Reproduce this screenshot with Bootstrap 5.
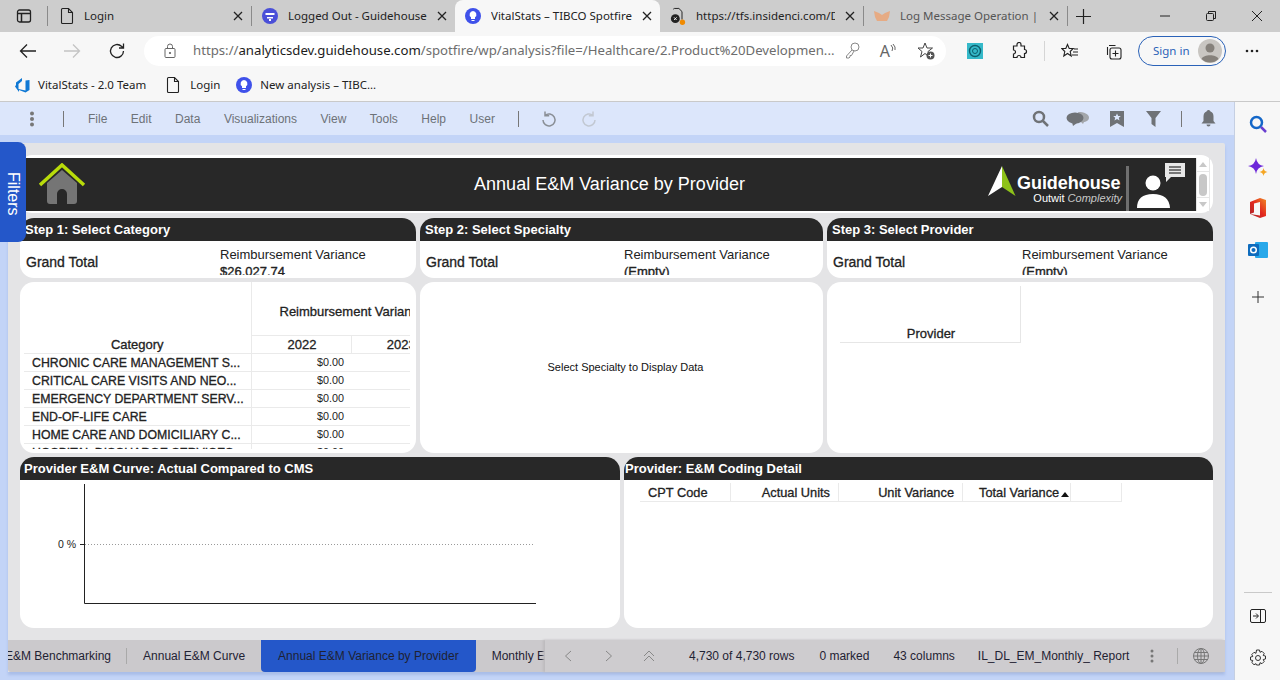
<!DOCTYPE html>
<html lang="en">
<head>
  <meta charset="UTF-8" />
  <title>VitalStats – TIBCO Spotfire</title>
  <link href="https://cdn.jsdelivr.net/npm/bootstrap@5.3.3/dist/css/bootstrap.min.css" rel="stylesheet">
  <style>
    html, body { width: 1280px; height: 680px; overflow: hidden; }
    body { font-family: "Liberation Sans", Arial, sans-serif; background: #c3d4f7; color: #000; position: relative; }
    svg { display: block; flex: none; }

    /* browser frame */
    .edge-font { font-family: "Noto Sans", sans-serif; font-size: 11.5px; color: #222; }
    .tab-strip { height: 32px; background: #cdcdcd; }
    .win-btn { width: 47px; flex: none; }
    .strip-sep { width: 1px; height: 20px; background: #8a8a8a; flex: none; }
    .brow-tab { height: 32px; padding: 0 8px 0 10px; gap: 10px; flex: none; white-space: nowrap; }
    .brow-tab .tab-name { flex: 1; overflow: hidden; white-space: nowrap; }
    .brow-tab.is-active { background: #f7f7f7; border-radius: 8px 8px 0 0; }
    .tab-one { width: 203px; padding-left: 12px; }
    .tab-two { width: 203px; }
    .tab-three { width: 205px; }
    .tab-four { width: 203px; }
    .tab-five { width: 203px; }
    .addr-bar { height: 37px; background: #f7f7f7; }
    .addr-pill { width: 802px; height: 30px; background: #fff; border-radius: 15px; margin-left: 18px; padding: 0 11px 0 20px; font-size: 13.2px; color: #6d6d6d; white-space: nowrap; }
    .addr-pill b { font-weight: 400; color: #1c1c1c; }
    .addr-url { flex: 1; overflow: hidden; margin-left: 17px; }
    .sign-pill { width: 88px; height: 30px; border: 1px solid #2a62b8; border-radius: 15px; color: #2a62b8; font-size: 11.5px; padding-left: 14px; }
    .book-bar { height: 33px; background: #f7f7f7; border-bottom: 1px solid #c9c9c9; padding-left: 14px; gap: 8px; }

    /* spotfire menu bar */
    .menu-bar { width: 1234px; height: 33px; background: #dce6fb; color: #6d7278; font-size: 12px; }
    .menu-items { gap: 23.5px; margin-left: 24px; }
    .bar-sep { width: 1px; height: 16px; background: #777; flex: none; }
    .work-row { height: 545px; }
    .side-rail { width: 46px; background: #f7f7f7; border-left: 1px solid #c5cfe2; margin-top: -33px; height: 578px; flex: none; z-index: 2; }
    .work-wrap { width: 1234px; padding: 8px 9px 0 8px; flex: none; }

    /* canvas */
    .app-canvas { height: 529px; background: #e4e4e6; padding: 12px 12px 0; border-radius: 2px 2px 0 0; box-shadow: 0 3px 3px #a9bde8; }
    .dash-head { height: 58px; background: #fff; border-radius: 12px; padding: 3px 3px 2px 0; }
    .dash-black { flex: 1; background: #282828; color: #fff; min-width: 0; }
    .dash-title { font-size: 18px; flex: 1; margin-left: 145px; }
    .home-mark { margin-left: 18px; margin-top: -1px; }
    .logo-tip { margin-bottom: 7px; }
    .logo-words { width: 105px; margin: 9px 0 0 1px; }
    .logo-rule { width: 3px; height: 45px; background: #6f6f6f; margin-left: 4px; }
    .mini-scroll { width: 14px; background: #fff; border: 1px solid #e6e6e6; border-width: 0 1px; }
    .mini-thumb { width: 8px; height: 22px; background: #c8c8c8; border-radius: 4px; }
    .scroll-cap { width: 100%; height: 14px; border-bottom: 1px solid #e6e6e6; }
    .scroll-cap.is-low { border-bottom: 0; border-top: 1px solid #e6e6e6; }
    .row-gap { gap: 4px; }
    .col-a { width: 396px; }
    .col-b { width: 403px; }
    .col-c { width: 386px; }
    .col-l { width: 600px; }
    .col-r { width: 589px; }
    .panel-box { background: #fff; border-radius: 14px; overflow: hidden; flex: none; }
    .panel-bar { height: 23px; background: #282828; color: #fff; font-size: 13px; font-weight: 700; line-height: 23px; padding-left: 5px; }
    .step-row { height: 60px; margin-top: 5px; }
    .mid-row { height: 171px; margin-top: 4px; }
    .low-row { height: 171px; margin-top: 4px; }
    .step-body { height: 34px; overflow: hidden; padding-left: 6px; }
    .grand-lbl { width: 194px; padding-top: 13px; font-size: 14px; color: #222; line-height: 16px; -webkit-text-stroke: .3px #222; }
    .var-lbl { font-size: 13px; line-height: 17px; padding-top: 5px; color: #222; }
    .var-lbl strong { display: block; font-weight: 400; -webkit-text-stroke: .35px #222; }

    /* cross tables */
    .tbl-clip { position: relative; width: 386px; height: 167px; margin: 0 0 0 4px; overflow: hidden; }
    .spot-tbl { border-collapse: collapse; table-layout: fixed; width: 500px; font-size: 12px; line-height: 15px; }
    .spot-tbl td, .spot-tbl th { padding: 0; border: 0 solid #eaeaea; white-space: nowrap; overflow: hidden; }
    .spot-tbl th { text-align: center; font-weight: 400; font-size: 13px; color: #222; -webkit-text-stroke: .3px #222; }
    .spot-tbl .cat-head { padding-bottom: 1px; border-right-width: 1px; border-bottom-width: 1px; vertical-align: bottom; }
    .spot-tbl .cat-cell { padding: 2px 0 0 8px; font-size: 12.3px; color: #222; -webkit-text-stroke: .3px #222; border-right-width: 1px; border-bottom-width: 1px; height: 18px; }
    .spot-tbl .val-cell { text-align: right; padding-right: 7px; font-size: 10.8px; color: #222; border-bottom-width: 1px; }
    .spot-tbl .clip-text { padding: 22px 0 0 28px; text-align: left; vertical-align: top; }
    .panel-note { font-size: 11px; color: #111; height: 171px; padding-left: 8px; }
    .prov-tbl { width: 181px; height: 57px; margin: 4px 0 0 13px; padding: 40px 0 0 2px; border-right: 1px solid #e6e6e6; border-bottom: 1px solid #e6e6e6; font-size: 13px; color: #222; -webkit-text-stroke: .3px #222; text-align: center; line-height: 15px; }
    .code-head { width: 482px; height: 19px; margin: 3px 0 0 16px; border-bottom: 1px solid #eaeaea; font-size: 12.8px; color: #222; -webkit-text-stroke: .3px #222; line-height: 19px; }
    .code-col { border-right: 1px solid #eaeaea; height: 18px; flex: none; text-align: right; padding-right: 8px; white-space: nowrap; }
    .sort-up { width: 0; height: 0; display: inline-block; border: 4px solid transparent; border-top-width: 0; border-bottom: 5px solid #111; margin-left: 2px; vertical-align: 0; }
    .chart-txt { font-family: "Liberation Sans", Arial, sans-serif; font-size: 10.5px; fill: #222; }

    /* bottom bar */
    .page-bar { height: 32px; background: #cbc9cc; margin: 12px -12px 0; font-size: 12px; color: #1f2233; border-radius: 0 0 3px 3px; white-space: nowrap; }
    .page-tabs { width: 537px; overflow: hidden; flex: none; height: 32px; }
    .page-first { margin-left: -3px; padding-right: 15px; border-right: 1px solid #a9a9a9; line-height: 16px; }
    .page-tab { padding: 0 16px; line-height: 32px; }
    .page-tab.is-open { background: #2457c9; border-radius: 0 0 4px 4px; width: 215px; padding: 0 17px; }
    .page-info { flex: 1; height: 32px; background: #cecccf; box-shadow: -2px 0 2px #bdbbbe; }
    .guide-mark { font-size: 18px; font-weight: 700; line-height: 18px; letter-spacing: -.05px; }
    .guide-sub { font-size: 11px; line-height: 12px; text-align: right; }
    .guide-sub i { color: #c9c9c9; font-weight: 400; }
    .filter-tab { position: absolute; left: 0; top: 142px; width: 26px; height: 100px; padding-top: 4px; background: #2457c9; border-radius: 0 8px 8px 0; color: #fff; font-size: 16px; writing-mode: vertical-rl; text-align: center; line-height: 26px; z-index: 5; font-family: "Liberation Sans", Arial, sans-serif; }
  </style>
</head>
<body>
  <div class="filter-tab">Filters</div>

  <!-- browser tabs -->
  <div class="tab-strip d-flex align-items-center edge-font">
    <div class="win-btn d-flex align-items-center ps-3">
      <svg width="16" height="16" viewBox="0 0 16 16" fill="none" stroke="#222" stroke-width="1.3"><rect x="1.5" y="2" width="13" height="12" rx="2"/><path d="M1.5 5.500h13M5.500 5.500V14" stroke-width="1.5"/></svg>
    </div>
    <div class="strip-sep"></div>
    <div class="brow-tab tab-one d-flex align-items-center">
      <svg width="14" height="18" viewBox="0 0 14 18" fill="none" stroke="#222" stroke-width="1.1"><path d="M1.500 2.500q0-1 1-1h6l4 4v10q0 1-1 1h-9q-1 0-1-1zM8.500 1.500v4h4"/></svg>
      <span class="tab-name">Login</span>
      <svg width="10" height="10" viewBox="0 0 10 10" stroke="#222" stroke-width="1.3"><path d="M1 1l8 8M9 1l-8 8"/></svg>
    </div>
    <div class="strip-sep"></div>
    <div class="brow-tab tab-two d-flex align-items-center">
      <svg width="16" height="16" viewBox="0 0 16 16"><circle cx="8" cy="8" r="8" fill="#4a4fd8"/><path d="M3.500 5h9v2h-9zM5 9h6v1.500H5zM7 11h2v2H7z" fill="#fff"/></svg>
      <span class="tab-name">Logged Out - Guidehouse</span>
      <svg width="10" height="10" viewBox="0 0 10 10" stroke="#222" stroke-width="1.3"><path d="M1 1l8 8M9 1l-8 8"/></svg>
    </div>
    <div class="brow-tab tab-three is-active d-flex align-items-center">
      <svg width="16" height="16" viewBox="0 0 16 16"><circle cx="8" cy="8" r="8" fill="#3f51ea"/><path d="M8 3a3.500 3.500 0 0 0-2 6.300V11h4V9.300A3.500 3.500 0 0 0 8 3zM6.500 12h3v1h-3z" fill="#fff"/></svg>
      <span class="tab-name">VitalStats – TIBCO Spotfire</span>
      <svg width="10" height="10" viewBox="0 0 10 10" stroke="#222" stroke-width="1.3"><path d="M1 1l8 8M9 1l-8 8"/></svg>
    </div>
    <div class="brow-tab tab-four d-flex align-items-center">
      <svg width="16" height="20" viewBox="0 0 18 20" fill="none"><path d="M4 2.500q0-1 1-1h5l3.500 3.500v9" stroke="#222" stroke-width="1.1"/><circle cx="6" cy="13" r="5" fill="#222"/><path d="M4.500 11.500l3 3M7.500 11.500l-3 3" stroke="#fff"/><circle cx="14" cy="17" r="3" fill="#f08a00"/></svg>
      <span class="tab-name">https://tfs.insidenci.com/D</span>
      <svg width="10" height="10" viewBox="0 0 10 10" stroke="#222" stroke-width="1.3"><path d="M1 1l8 8M9 1l-8 8"/></svg>
    </div>
    <div class="strip-sep"></div>
    <div class="brow-tab tab-five d-flex align-items-center">
      <svg width="16" height="12" viewBox="0 0 16 12" fill="#e6ab84"><path d="M0 1l5 2 3 2 3-2 5-2-1 6-2 4H3L1 7z"/></svg>
      <span class="tab-name" style="color:#555">Log Message Operation | T</span>
      <svg width="10" height="10" viewBox="0 0 10 10" stroke="#222" stroke-width="1.3"><path d="M1 1l8 8M9 1l-8 8"/></svg>
    </div>
    <div class="strip-sep"></div>
    <svg class="ms-2" width="15" height="15" viewBox="0 0 15 15" stroke="#222" stroke-width="1.2"><path d="M7.500 0v15M0 7.500h15"/></svg>
    <div class="d-flex align-items-center ms-auto" style="gap:36px;padding-right:18px">
      <svg width="10" height="10" viewBox="0 0 10 10" stroke="#222"><path d="M0 5h10"/></svg>
      <svg width="10" height="10" viewBox="0 0 10 10" fill="none" stroke="#222"><rect x=".5" y="2.500" width="7" height="7" rx="1"/><path d="M2.500 2.500V.5h7v7H7.500"/></svg>
      <svg width="10" height="10" viewBox="0 0 10 10" stroke="#222"><path d="M0 0l10 10M10 0L0 10"/></svg>
    </div>
  </div>

  <!-- address bar -->
  <div class="addr-bar d-flex align-items-center edge-font">
    <svg style="margin-left:19px" width="18" height="16" viewBox="0 0 18 16" fill="none" stroke="#222" stroke-width="1.300"><path d="M17 8H1.500M8 1.500L1.500 8 8 14.500"/></svg>
    <svg style="margin-left:26px" width="18" height="16" viewBox="0 0 18 16" fill="none" stroke="#c4c4c4" stroke-width="1.300"><path d="M1 8h15.500M10 1.500L16.500 8 10 14.500"/></svg>
    <svg style="margin-left:27px" width="18" height="18" viewBox="0 0 18 18" fill="none" stroke="#222" stroke-width="1.300"><path d="M15.500 9a6.500 6.500 0 1 1-2-4.700L15.500 6M15.500 1.500V6H11"/></svg>
    <div class="addr-pill d-flex align-items-center">
      <svg width="12" height="15" viewBox="0 0 12 15" fill="none" stroke="#666"><rect x="1" y="5.500" width="10" height="9" rx="1"/><path d="M3.500 5.500V3.500a2.500 2.500 0 0 1 5 0v2"/><circle cx="6" cy="10" r=".7" fill="#666"/></svg>
      <span class="addr-url">https://<b>analyticsdev.guidehouse.com</b>/spotfire/wp/analysis?file=/Healthcare/2.Product%20Developmen...</span>
      <svg class="ms-2" width="15" height="17" viewBox="0 0 15 17" fill="none" stroke="#888"><circle cx="10" cy="5" r="4"/><path d="M7 8L1.500 14v2h2.500l1-1v-1.500h1.500L9 9"/></svg>
      <span style="margin-left:20px;font-size:16px;color:#666;line-height:1">A</span>
      <svg width="6" height="10" viewBox="0 0 6 10" fill="none" stroke="#666" class="align-self-start mt-2"><path d="M1 1q3 3 1 6M3 0q3 3 2 6"/></svg>
      <svg style="margin-left:21px" width="18" height="18" viewBox="0 0 18 18" fill="none" stroke="#444"><path d="M8 1l2 5h5.500L11 9.500 12.500 15 8 11.500 3.500 15 5 9.500 1 6h5z"/><circle cx="13.500" cy="13.500" r="4" fill="#555" stroke="none"/><path d="M13.500 11.500v4M11.500 13.500h4" stroke="#fff"/></svg>
    </div>
    <svg style="margin-left:21px" width="16" height="16" viewBox="0 0 16 16"><rect width="16" height="16" fill="#35b9c9"/><circle cx="8" cy="8" r="5.500" fill="none" stroke="#0d5f6e" stroke-width="1.400"/><circle cx="8" cy="8" r="2.500" fill="none" stroke="#0d5f6e"/></svg>
    <svg style="margin-left:27px" width="18" height="18" viewBox="0 0 18 18" fill="none" stroke="#222" stroke-width="1.200"><path d="M7 2.500a2 2 0 0 1 4 0V4h3.500v3.500a2 2 0 0 1 0 4V15.500H11a2 2 0 0 0-4 0H3.500V12a2 2 0 0 0 0-4V4H7z"/></svg>
    <div class="ms-3" style="width:1px;height:20px;background:#d5d5d5"></div>
    <svg class="ms-3" width="18" height="16" viewBox="0 0 18 16" fill="none" stroke="#222" stroke-width="1.100"><path d="M6.500 1.500l1.700 4h4l-3 3 1 4.500-3.700-2.500L2.800 13l1-4.500-3-3h4zM13 6h4M12 9h5M11 12h6"/></svg>
    <svg style="margin-left:26px" width="18" height="18" viewBox="0 0 18 18" fill="none" stroke="#222" stroke-width="1.100"><path d="M4 3.500h6.500M2.500 5v8"/><rect x="5" y="6" width="11" height="11" rx="2"/><path d="M10.500 8.500v6M7.500 11.500h6"/></svg>
    <div class="sign-pill d-flex align-items-center justify-content-between" style="margin-left:15px;padding-right:3px">
      <span>Sign in</span>
      <svg width="24" height="24" viewBox="0 0 24 24"><circle cx="12" cy="12" r="12" fill="#c9c6c2"/><circle cx="12" cy="9" r="4.500" fill="#86817b"/><path d="M3.500 20c2-5 15-5 17 0a12 12 0 0 1-17 0z" fill="#86817b"/></svg>
    </div>
    <div class="d-flex ms-auto" style="padding-right:21px">
      <svg width="14" height="4" viewBox="0 0 14 4" fill="#222"><circle cx="2" cy="2" r="1.300"/><circle cx="7" cy="2" r="1.300"/><circle cx="12" cy="2" r="1.300"/></svg>
    </div>
  </div>

  <!-- favourites -->
  <div class="book-bar d-flex align-items-center edge-font">
    <svg width="16" height="16" viewBox="0 0 16 16"><path d="M15.500 3v10l-4 2.500-6.500-2.500v2L1 9.500l1-1.500V5.500L8 1v3l-3.500 3v5l7 1.500V3.500z" fill="#0f78d4"/></svg>
    <span>VitalStats - 2.0 Team</span>
    <svg style="margin-left:12px" width="14" height="18" viewBox="0 0 14 18" fill="none" stroke="#222" stroke-width="1.100"><path d="M1.500 2.500q0-1 1-1h6l4 4v10q0 1-1 1h-9q-1 0-1-1zM8.500 1.500v4h4"/></svg>
    <span style="margin-left:2px">Login</span>
    <svg style="margin-left:8px" width="16" height="16" viewBox="0 0 16 16"><circle cx="8" cy="8" r="8" fill="#3f51ea"/><path d="M8 3a3.500 3.500 0 0 0-2 6.300V11h4V9.300A3.500 3.500 0 0 0 8 3zM6.500 12h3v1h-3z" fill="#fff"/></svg>
    <span>New analysis – TIBC...</span>
  </div>

  <!-- spotfire menu -->
  <div class="menu-bar d-flex align-items-center">
    <svg style="margin-left:29px" width="6" height="16" viewBox="0 0 6 16" fill="#777"><circle cx="3" cy="2.500" r="2"/><circle cx="3" cy="8" r="2"/><circle cx="3" cy="13.500" r="2"/></svg>
    <div class="bar-sep" style="margin-left:28px"></div>
    <div class="menu-items d-flex">
      <span>File</span><span>Edit</span><span>Data</span><span>Visualizations</span><span>View</span><span>Tools</span><span>Help</span><span>User</span>
    </div>
    <div class="bar-sep" style="margin-left:23px"></div>
    <svg style="margin-left:22px" width="16" height="18" viewBox="0 0 16 18" fill="none" stroke="#8a8f96" stroke-width="1.500"><path d="M4 5.500a6 6 0 1 1-2 4.500M4 1.500v4.200h4.200"/></svg>
    <svg style="margin-left:24px" width="16" height="18" viewBox="0 0 16 18" fill="none" stroke="#c2c8d2" stroke-width="1.500"><path d="M12 5.500a6 6 0 1 0 2 4.500M12 1.500v4.200H7.800"/></svg>
    <div class="d-flex align-items-center ms-auto" style="padding-right:18px">
      <svg width="17" height="17" viewBox="0 0 17 17" fill="none" stroke="#6f7276" stroke-width="2.500"><circle cx="7" cy="7" r="5"/><path d="M11 11l5 5"/></svg>
      <svg style="margin-left:17px" width="24" height="16" viewBox="0 0 24 16"><path d="M12 1c6 0 11 2 11 5.500S19 11 18 11l-1 2-2-2z" fill="#a3a6aa"/><ellipse cx="9" cy="7" rx="8.500" ry="5.500" fill="#6f7276"/><path d="M6 11l1 4 4-3z" fill="#6f7276"/></svg>
      <svg style="margin-left:20px" width="14" height="16" viewBox="0 0 14 16"><path d="M0 0h14v16l-7-4-7 4z" fill="#6f7276"/><path d="M7 2.500l1.200 2.500h2.600l-2 1.800.7 2.700L7 8l-2.500 1.500.7-2.700-2-1.800h2.600z" fill="#dce6fb"/></svg>
      <svg style="margin-left:22px" width="15" height="16" viewBox="0 0 15 16" fill="#6f7276"><path d="M0 0h15L9.500 7v9l-4-3V7z"/></svg>
      <div class="bar-sep" style="margin-left:20px"></div>
      <svg style="margin-left:19px" width="15" height="17" viewBox="0 0 15 17" fill="#6f7276"><path d="M7.500 0a2 2 0 0 1 2 1.500c2 .5 3 2.500 3 5V11l2 2.500H.5L2.500 11V6.500c0-2.500 1-4.500 3-5a2 2 0 0 1 2-1.500zM5.500 14.500h4a2 2 0 0 1-4 0z"/></svg>
    </div>
  </div>

  <div class="work-row d-flex">
    <div class="work-wrap">
      <div class="app-canvas">
        <!-- title strip -->
        <div class="dash-head d-flex">
          <div class="dash-black d-flex align-items-center">
            <svg class="home-mark" width="48" height="42" viewBox="0 0 48 42"><path d="M9 20L24 7l15 13v18q0 3-3 3h-7V31a5 5 0 0 0-10 0v10h-7q-3 0-3-3z" fill="#757575"/><path d="M2 22L24 2l22 20" fill="none" stroke="#b9dc0a" stroke-width="3.500"/></svg>
            <div class="text-center dash-title">Annual E&amp;M Variance by Provider</div>
            <svg class="logo-tip" width="28" height="30" viewBox="0 0 28 30"><path d="M14 0L0 30l14-9z" fill="#fff"/><path d="M14 0l13.500 30L14 21z" fill="#8ec21a"/></svg>
            <div class="logo-words">
              <div class="guide-mark">Guidehouse</div>
              <div class="guide-sub">Outwit <i>Complexity</i></div>
            </div>
            <div class="logo-rule align-self-end"></div>
            <svg style="margin:0 11px 0 8px" width="48" height="48" viewBox="0 0 48 48"><circle cx="16" cy="22" r="7.500" fill="#fff"/><path d="M0 47q0-14 16-14t17 14z" fill="#fff"/><path d="M28 2h20v14H34l-5 5v-5h-1z" fill="#e8e8e8"/><path d="M32 6h12M32 9h12M32 12h12" stroke="#777" stroke-width="2"/></svg>
          </div>
          <div class="mini-scroll d-flex flex-column align-items-center justify-content-between">
            <div class="scroll-cap d-flex align-items-center justify-content-center"><svg width="8" height="5" viewBox="0 0 8 5" fill="#c8c8c8"><path d="M0 5l4-5 4 5z"/></svg></div>
            <div class="mini-thumb"></div>
            <div class="scroll-cap is-low d-flex align-items-center justify-content-center"><svg width="8" height="5" viewBox="0 0 8 5" fill="#c8c8c8"><path d="M0 0l4 5 4-5z"/></svg></div>
          </div>
        </div>

        <!-- step headers -->
        <div class="d-flex row-gap step-row">
          <div class="panel-box col-a">
            <div class="panel-bar">Step 1: Select Category</div>
            <div class="step-body d-flex">
              <div class="grand-lbl">Grand Total</div>
              <div class="var-lbl">Reimbursement Variance<strong>$26,027.74</strong></div>
            </div>
          </div>
          <div class="panel-box col-b">
            <div class="panel-bar">Step 2: Select Specialty</div>
            <div class="step-body d-flex">
              <div class="grand-lbl" style="width:198px">Grand Total</div>
              <div class="var-lbl">Reimbursement Variance<strong>(Empty)</strong></div>
            </div>
          </div>
          <div class="panel-box col-c">
            <div class="panel-bar">Step 3: Select Provider</div>
            <div class="step-body d-flex">
              <div class="grand-lbl" style="width:189px">Grand Total</div>
              <div class="var-lbl">Reimbursement Variance<strong>(Empty)</strong></div>
            </div>
          </div>
        </div>

        <!-- cross tables -->
        <div class="d-flex row-gap mid-row">
          <div class="panel-box col-a">
            <div class="tbl-clip">
              <table class="spot-tbl">
                <colgroup><col style="width:227px"><col style="width:100px"><col style="width:100px"><col style="width:73px"></colgroup>
                <tr>
                  <th rowspan="2" class="cat-head">Category</th>
                  <th colspan="3" class="clip-text" style="height:53px;border-bottom-width:1px">Reimbursement Variance</th>
                </tr>
                <tr>
                  <th style="height:18px;border-right-width:1px;border-bottom-width:1px;padding-left:2px">2022</th>
                  <th style="border-bottom-width:1px">2023</th><th style="border-bottom-width:1px"></th>
                </tr>
                <tr><td class="cat-cell">CHRONIC CARE MANAGEMENT S...</td><td class="val-cell">$0.00</td><td class="val-cell"></td><td class="val-cell"></td></tr>
                <tr><td class="cat-cell">CRITICAL CARE VISITS AND NEO...</td><td class="val-cell">$0.00</td><td class="val-cell"></td><td class="val-cell"></td></tr>
                <tr><td class="cat-cell">EMERGENCY DEPARTMENT SERV...</td><td class="val-cell">$0.00</td><td class="val-cell"></td><td class="val-cell"></td></tr>
                <tr><td class="cat-cell">END-OF-LIFE CARE</td><td class="val-cell">$0.00</td><td class="val-cell"></td><td class="val-cell"></td></tr>
                <tr><td class="cat-cell">HOME CARE AND DOMICILIARY C...</td><td class="val-cell">$0.00</td><td class="val-cell"></td><td class="val-cell"></td></tr>
                <tr><td class="cat-cell">HOSPITAL DISCHARGE SERVICES</td><td class="val-cell">$0.00</td><td class="val-cell"></td><td class="val-cell"></td></tr>
              </table>
            </div>
          </div>
          <div class="panel-box col-b">
            <div class="panel-note d-flex align-items-center justify-content-center">Select Specialty to Display Data</div>
          </div>
          <div class="panel-box col-c">
            <div class="prov-tbl">Provider</div>
          </div>
        </div>

        <!-- curve and coding detail -->
        <div class="d-flex row-gap low-row">
          <div class="panel-box col-l">
            <div class="panel-bar" style="padding-left:4px">Provider E&amp;M Curve: Actual Compared to CMS</div>
            <svg width="600" height="148" viewBox="0 0 600 148">
              <path d="M64.500 4v119.500H516" fill="none" stroke="#222"/>
              <path d="M65 64.500h450" stroke="#9a9a9a" stroke-dasharray="1 2"/>
              <path d="M60 64.500h4" stroke="#222"/>
              <text class="chart-txt" x="38" y="68">0 %</text>
            </svg>
          </div>
          <div class="panel-box col-r">
            <div class="panel-bar" style="padding-left:1px">Provider: E&amp;M Coding Detail</div>
            <div class="code-head d-flex">
              <div class="code-col" style="width:91px;text-align:left;padding-left:8px">CPT Code</div>
              <div class="code-col" style="width:108px">Actual Units</div>
              <div class="code-col" style="width:124px">Unit Variance</div>
              <div class="code-col" style="width:108px;text-align:left;padding:0 0 0 16px">Total Variance<span class="sort-up"></span></div>
              <div class="code-col" style="width:51px"></div>
            </div>
          </div>
        </div>

        <!-- page tabs and status -->
        <div class="page-bar d-flex">
          <div class="page-tabs d-flex align-items-center">
            <div class="page-first">E&amp;M Benchmarking</div>
            <div class="page-tab">Annual E&amp;M Curve</div>
            <div class="page-tab is-open">Annual E&amp;M Variance by Provider</div>
            <div class="page-tab">Monthly E&amp;M</div>
          </div>
          <div class="page-info d-flex align-items-center">
            <svg style="margin-left:19px" width="8" height="12" viewBox="0 0 8 12" fill="none" stroke="#888"><path d="M7 1L1.500 6 7 11"/></svg>
            <svg style="margin-left:33px" width="8" height="12" viewBox="0 0 8 12" fill="none" stroke="#888"><path d="M1 1l5.500 5L1 11"/></svg>
            <svg style="margin-left:30px" width="12" height="12" viewBox="0 0 12 12" fill="none" stroke="#888"><path d="M1 6l5-5 5 5M1 11l5-5 5 5"/></svg>
            <span style="margin-left:34px">4,730 of 4,730 rows</span>
            <span style="margin-left:25px">0 marked</span>
            <span style="margin-left:24px">43 columns</span>
            <span style="margin-left:23px">IL_DL_EM_Monthly_ Report</span>
            <svg style="margin-left:21px" width="4" height="14" viewBox="0 0 4 14" fill="#777"><circle cx="2" cy="2" r="1.500"/><circle cx="2" cy="7" r="1.500"/><circle cx="2" cy="12" r="1.500"/></svg>
            <div class="bar-sep" style="margin-left:23px;background:#aaa"></div>
            <svg style="margin-left:15px" width="16" height="16" viewBox="0 0 16 16" fill="none" stroke="#777"><circle cx="8" cy="8" r="7.500"/><ellipse cx="8" cy="8" rx="3.500" ry="7.500"/><path d="M8 .5v15M.5 8h15M1.500 4.500h13M1.500 11.500h13"/></svg>
          </div>
        </div>
      </div>
    </div>

    <!-- edge side rail -->
    <div class="side-rail d-flex flex-column align-items-center">
      <svg style="margin-top:13px" width="18" height="18" viewBox="0 0 18 18" fill="none" stroke-width="2.500"><circle cx="7.500" cy="7.500" r="5.500" stroke="#1467c8"/><path d="M12 12l5 5" stroke="#6a3fd0"/></svg>
      <svg style="margin-top:25px" width="20" height="20" viewBox="0 0 20 20"><path d="M8 0q1 7 8 8-7 1-8 8-1-7-8-8 7-1 8-8z" fill="#6d28d9"/><path d="M15.500 10q.5 3.500 4 4-3.500.5-4 4-.5-3.500-4-4 3.500-.5 4-4z" fill="#f5a623"/></svg>
      <svg style="margin-top:20px" width="16" height="20" viewBox="0 0 16 20"><defs><linearGradient id="officeFill" x1="0" y1="1" x2="1" y2="0"><stop offset="0" stop-color="#a4262c"/><stop offset=".5" stop-color="#e3281f"/><stop offset="1" stop-color="#f08a24"/></linearGradient></defs><path d="M0 4l10-4 6 2v16l-6 2-10-4 10 1.500V4L4 5.500v9L0 16z" fill="url(#officeFill)"/></svg>
      <svg style="margin-top:23px" width="20" height="18" viewBox="0 0 20 18"><rect x="7" y="1" width="13" height="16" rx="1" fill="#28a8ea"/><rect y="3" width="11" height="12" rx="1" fill="#0f6cbd"/><circle cx="5.500" cy="9" r="2.800" fill="none" stroke="#fff" stroke-width="1.500"/></svg>
      <svg style="margin-top:32px" width="12" height="12" viewBox="0 0 12 12" stroke="#333"><path d="M6 0v12M0 6h12"/></svg>
      <div class="mt-auto" style="width:28px;height:1px;background:#c9c9c9;margin-bottom:16px"></div>
      <svg width="16" height="14" viewBox="0 0 16 14" fill="none" stroke="#222"><rect x=".5" y=".5" width="15" height="13" rx="1.500"/><path d="M10.500 .5v13M3 7h5M6 4.500L8.500 7 6 9.500"/></svg>
      <svg style="margin:26px 0 13px" width="18" height="18" viewBox="0 0 18 18" fill="none" stroke="#333"><circle cx="9" cy="9" r="2.500"/><path d="M7.500 1h3l.5 2.300 2-1 2.200 2.200-1 2 2.300.5v3l-2.300.5 1 2-2.200 2.200-2-1-.5 2.300h-3L7 14.700l-2 1-2.200-2.200 1-2L1.500 11V8l2.300-.5-1-2L5 3.300l2 1z"/></svg>
    </div>
  </div>
</body>
</html>
